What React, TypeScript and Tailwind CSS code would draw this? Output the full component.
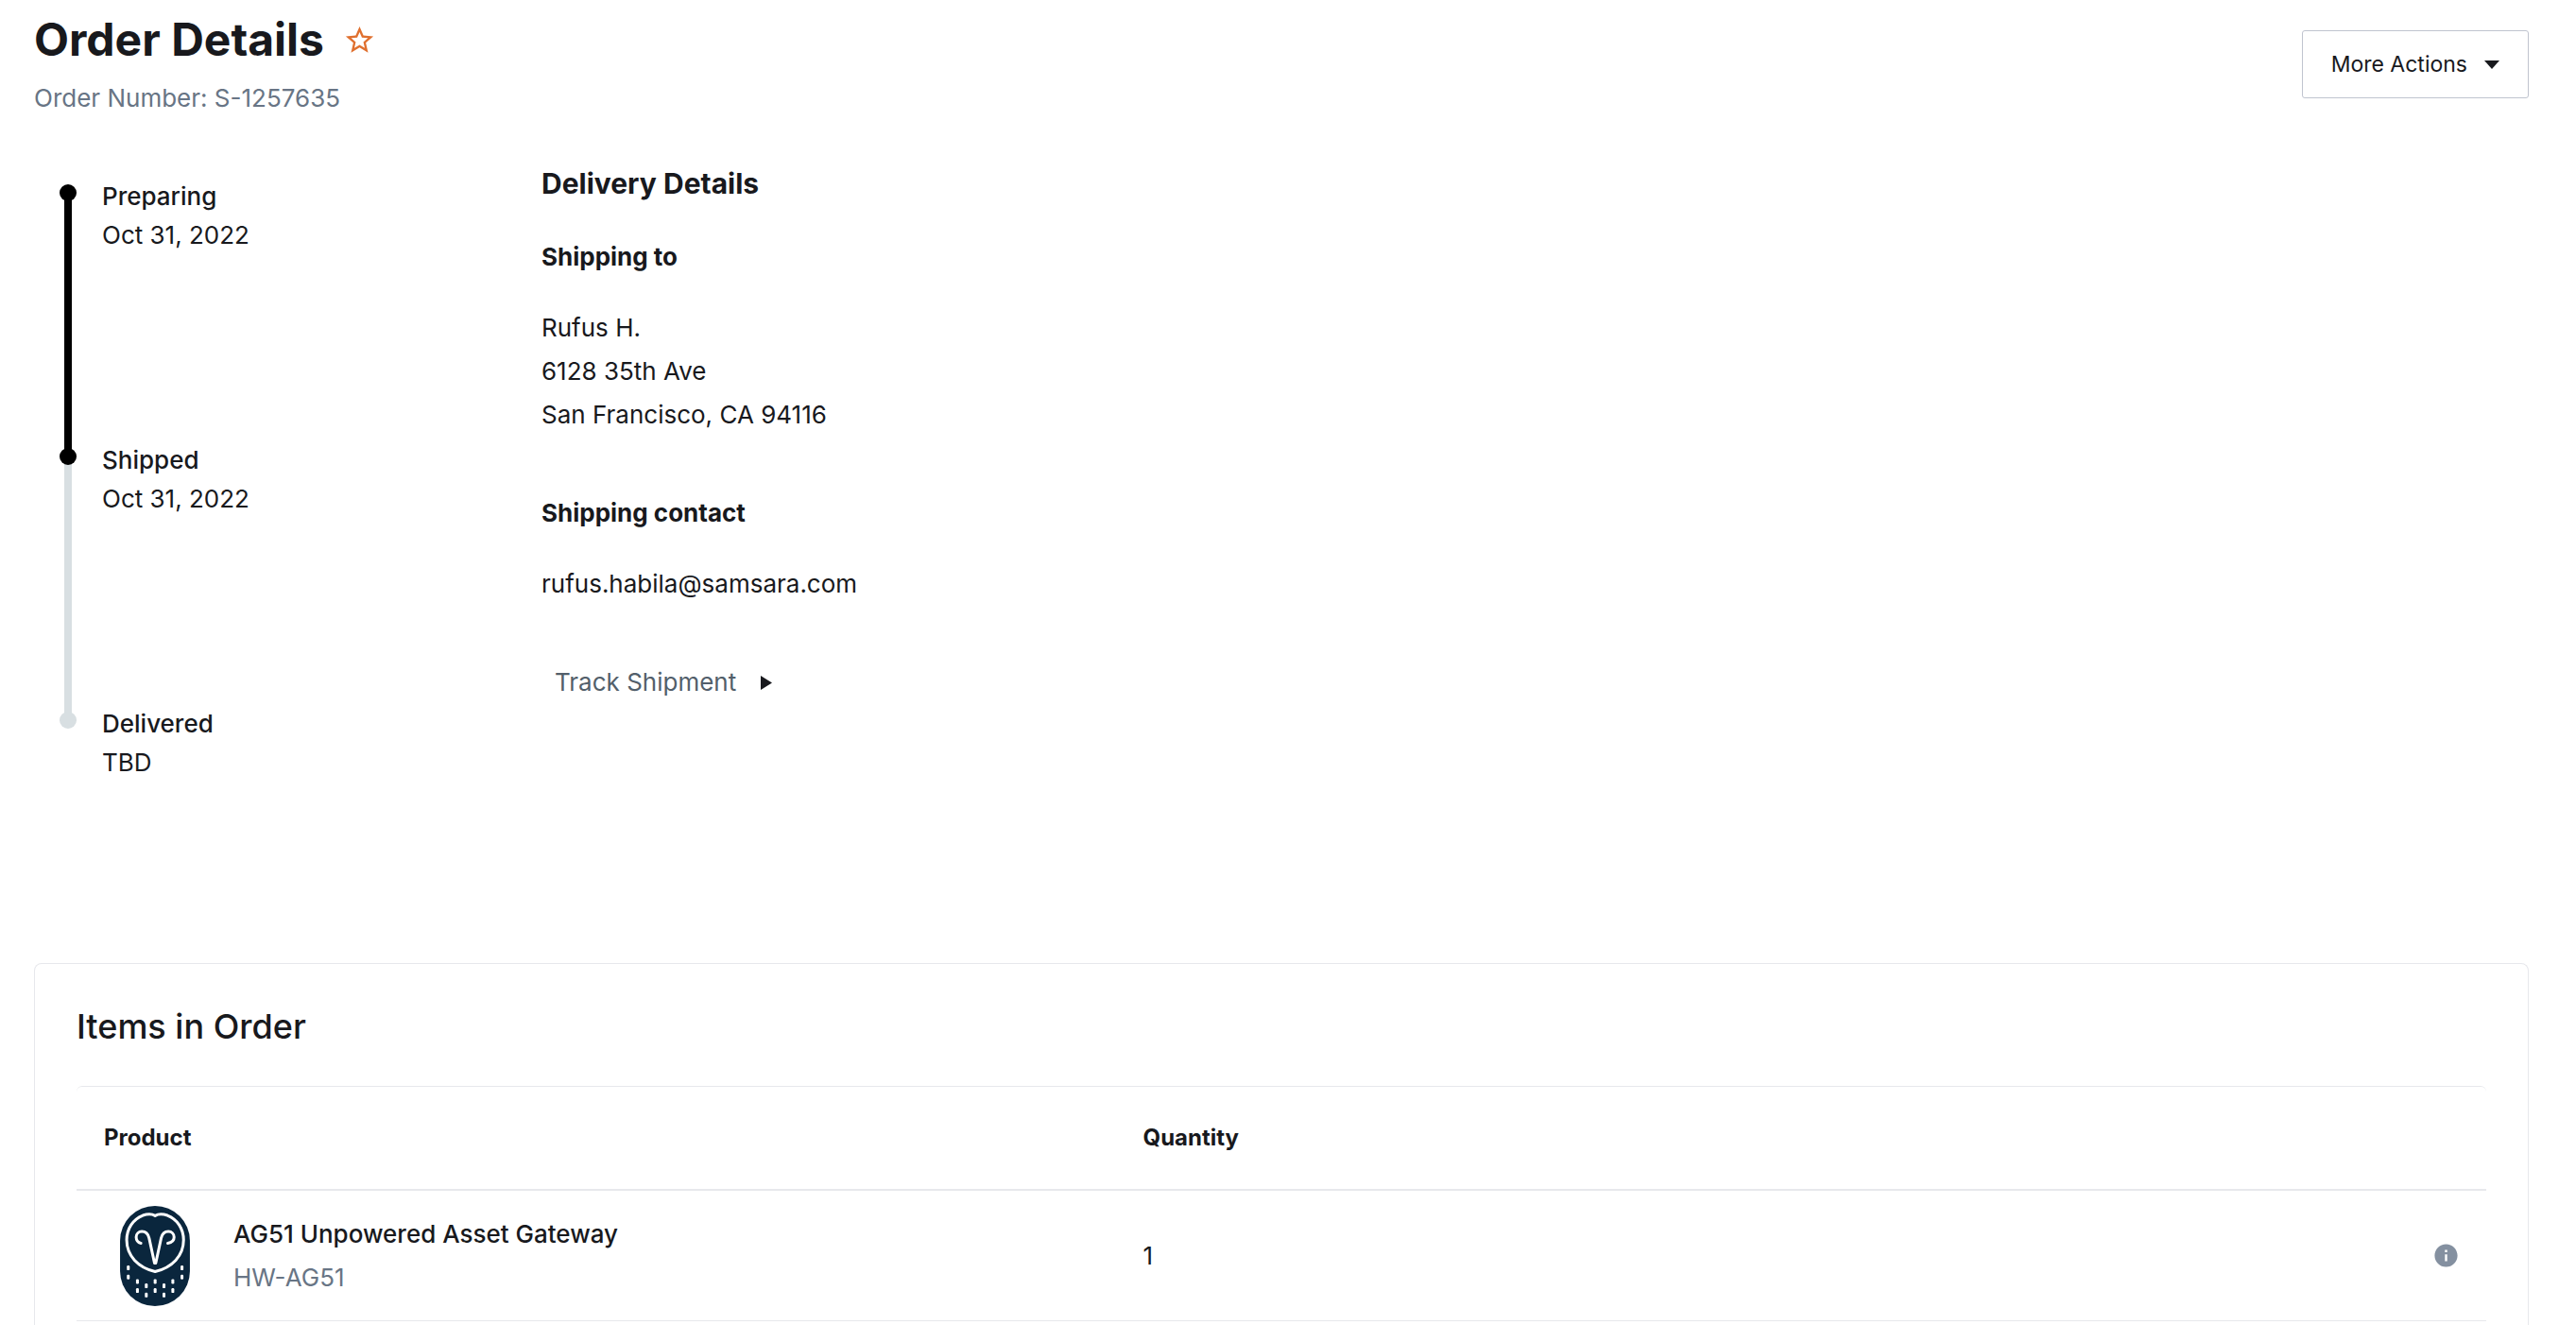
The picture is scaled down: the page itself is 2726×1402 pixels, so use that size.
import { MdInfo, MdStarOutline } from "react-icons/md";

const steps = [
    { label: "Preparing", date: "Oct 31, 2022", done: true, lineDone: true },
    { label: "Shipped", date: "Oct 31, 2022", done: true, lineDone: false },
    { label: "Delivered", date: "TBD", done: false, lineDone: false },
];

const items = [{ name: "AG51 Unpowered Asset Gateway", sku: "HW-AG51", quantity: 1 }];

// x, y of each feather mark
const feathers = [
    [107, 304], [107, 333], [277, 304], [277, 333],
    [136, 347], [136, 376], [248, 347], [248, 376],
    [164, 361], [164, 390], [220, 361], [220, 390],
    [192, 347], [192, 376],
];

function OwlLogo() {
    return (
        <svg viewBox="81 108 221 317" className="h-[106px] w-[74px] shrink-0" aria-hidden="true">
            <rect x="81" y="108" width="221" height="317" rx="110.5" fill="#0a263d" />
            <g fill="none" stroke="#fff" strokeWidth="9" strokeLinecap="round" strokeLinejoin="round">
                <path d="M192 139C182 133 165 134 153 138C122 150 102 180 102 216C102 266 138 303 192 316C246 303 282 266 282 216C282 180 262 150 231 138C219 134 202 133 192 139Z" />
                <path d="M147 226C137 224 132 215 132 207C132 196 140 189 150 189C163 189 170 198 173 210L190 289H194L211 210C214 198 221 189 234 189C244 189 252 196 252 207C252 215 247 224 232 226" />
            </g>
            {feathers.map(([x, y]) => (
                <rect key={`${x}-${y}`} x={x - 4.5} y={y - 7.5} width="9" height="15" rx="3.5" fill="#fff" />
            ))}
        </svg>
    );
}

function Timeline() {
    return (
        <ol className="w-[537px] shrink-0 pt-[13px] pl-[27px]">
            {steps.map((step, i) => {
                const last = i === steps.length - 1;
                return (
                    <li key={step.label} className={`flex gap-[27px] ${last ? "" : "h-[279px]"}`}>
                        <div className="flex w-[18px] flex-col items-center">
                            <span className={`z-10 mt-2 h-[18px] w-[18px] shrink-0 rounded-full ${step.done ? "bg-black" : "bg-[#d8dfe2]"}`} />
                            {!last && <span className={`-mt-2 -mb-4 w-2 flex-1 ${step.lineDone ? "bg-black" : "bg-[#d8dfe2]"}`} />}
                        </div>
                        <div className="text-[26px] leading-[41px]">
                            <p className="font-medium">{step.label}</p>
                            <p>{step.date}</p>
                        </div>
                    </li>
                );
            })}
        </ol>
    );
}

function DeliveryDetails() {
    return (
        <section className="text-[26px]">
            <h2 className="text-[30px] leading-10 font-bold">Delivery Details</h2>
            <h3 className="mt-[38px] leading-10 font-bold">Shipping to</h3>
            <address className="mt-8 leading-[46px] not-italic">
                Rufus H.
                <br />
                6128 35th Ave
                <br />
                San Francisco, CA 94116
            </address>
            <h3 className="mt-[61px] leading-10 font-bold">Shipping contact</h3>
            <p className="mt-8 leading-[46px]">rufus.habila@samsara.com</p>
            <button type="button" className="mt-[61px] flex items-center gap-[26px] pl-[14px] leading-10 text-[#535f6b]">
                Track Shipment
                <svg viewBox="0 0 12 15" className="h-[15px] w-3" aria-hidden="true">
                    <path d="M0 0L12 7.5L0 15Z" fill="#18191d" />
                </svg>
            </button>
        </section>
    );
}

export default function App() {
    return (
        <main className="flex min-h-screen flex-col bg-white pt-4 pr-[50px] pl-9 font-['Inter',sans-serif] text-[#18191d]">
            <header className="flex items-start justify-between">
                <div>
                    <div className="flex items-center gap-5">
                        <h1 className="text-[48px] leading-[52px] font-bold">Order Details</h1>
                        <button type="button" aria-label="Favorite order" className="text-[#e0702f]">
                            <MdStarOutline size={35} />
                        </button>
                    </div>
                    <p className="mt-4 text-[26px] leading-10 text-[#687585]">Order Number: S-1257635</p>
                </div>
                <button
                    type="button"
                    className="mt-4 flex h-[72px] items-center gap-[18px] rounded-[3px] border border-[#c0c4cf] px-[30px] text-[23px]"
                >
                    More Actions
                    <svg viewBox="0 0 16 9" className="h-[9px] w-4" aria-hidden="true">
                        <path d="M0 0H16L8 9Z" fill="#18191d" />
                    </svg>
                </button>
            </header>

            <div className="mt-[50px] flex">
                <Timeline />
                <DeliveryDetails />
            </div>

            <section className="mt-48 flex-1 rounded-t-lg border border-b-0 border-[#e7e8ec] px-11 pt-[42px]">
                <h2 className="text-[36px] leading-[48px] font-medium">Items in Order</h2>
                <table className="mt-[39px] w-full table-fixed border-separate border-spacing-0 rounded-t-md border-t border-[#e7e8ec] text-left">
                    <thead className="text-[24px]">
                        <tr className="h-[110px]">
                            <th className="w-[43%] border-b-2 border-[#e7e8ec] px-[29px] font-bold">Product</th>
                            <th className="border-b-2 border-[#e7e8ec] px-8 font-bold">Quantity</th>
                            <th className="w-[120px] border-b-2 border-[#e7e8ec]" aria-label="Info" />
                        </tr>
                    </thead>
                    <tbody className="text-[26px] leading-[46px]">
                        {items.map((item) => (
                            <tr key={item.sku} className="h-[138px]">
                                <td className="border-b border-[#e7e8ec] px-[46px]">
                                    <div className="flex items-center gap-[46px]">
                                        <OwlLogo />
                                        <div>
                                            <p className="font-medium">{item.name}</p>
                                            <p className="text-[#687585]">{item.sku}</p>
                                        </div>
                                    </div>
                                </td>
                                <td className="border-b border-[#e7e8ec] px-8">{item.quantity}</td>
                                <td className="border-b border-[#e7e8ec] pr-7">
                                    <button type="button" aria-label="Item information" className="ml-auto block text-[#8490a0]">
                                        <MdInfo size={29} />
                                    </button>
                                </td>
                            </tr>
                        ))}
                    </tbody>
                </table>
            </section>
        </main>
    );
}
